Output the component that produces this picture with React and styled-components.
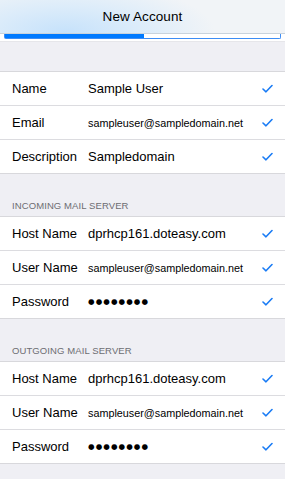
import React from 'react';
import styled, { createGlobalStyle } from 'styled-components';

const Global = createGlobalStyle`
body {
  margin: 0;
  background: #efeff4;
  font-family: "Liberation Sans", Arial, sans-serif;
  color: #000;
}
`

const Page = styled.div`
width: 285px;
height: 479px;
overflow: hidden;
background: #efeff4;
`

const Header = styled.div`
height: 33px;
display: flex;
align-items: center;
justify-content: center;
background: radial-gradient(ellipse 150px 50px at 65px 32px, #c6e2fb 0%, #dcecfa 50%, #f1f4f7 100%);
border-bottom: 1px solid #c9d3dc;
font-size: 13.5px;
font-weight: 500;
letter-spacing: 0.1px;
`

const ProgressWrap = styled.div`
background: #ffffff;
padding: 0 4px 2px 4px;
border-bottom: 1px solid #e6e6ea;
`

const Track = styled.div`
height: 4px;
border: 1px solid #3d8df5;
border-top: none;
border-radius: 0 0 2px 2px;
background: #fff;
`

const Fill = styled.div`
height: 100%;
background: #007aff;
`

const Spacer = styled.div`
height: ${p => p.h}px;
`

const SectionTitle = styled.div`
height: 42px;
box-sizing: border-box;
display: flex;
align-items: flex-end;
padding: 0 12px 5px;
font-size: 9.5px;
color: #6d6d72;
letter-spacing: 0.1px;
`

const Section = styled.div`
background: #fff;
border-top: 1px solid #d8d8dc;
border-bottom: 1px solid #d8d8dc;
`

const Row = styled.div`
height: 33px;
display: flex;
align-items: center;
padding-left: 12px;
& + & {
  border-top: 1px solid #dcdce0;
}
`

const Label = styled.div`
width: 76px;
font-size: 13px;
flex-shrink: 0;
`

const Value = styled.div`
flex: 1;
font-size: ${p => (p.small ? '10.8px' : '13px')};
white-space: nowrap;
`

const Dots = styled.div`
flex: 1;
font-family: "DejaVu Sans", sans-serif;
font-size: 7.5px;
letter-spacing: 1.1px;
`

const Check = styled.svg`
width: 11px;
height: 9px;
margin-right: 12px;
flex-shrink: 0;
`

function Tick() {
  return (
    <Check viewBox="0 0 11 9">
      <path d="M1 5 L4 7.8 L10 1.5" fill="none" stroke="#1a7cf5" strokeWidth="1.6" strokeLinecap="round" strokeLinejoin="round" />
    </Check>
  );
}

function Field({ label, value, small, password }) {
  return (
    <Row>
      <Label>{label}</Label>
      {password ? <Dots>{value}</Dots> : <Value small={small}>{value}</Value>}
      <Tick />
    </Row>
  );
}

function App() {
  return (
    <Page>
      <Global />
      <Header>New Account</Header>
      <ProgressWrap>
        <Track>
          <Fill style={{ width: '50.5%' }} />
        </Track>
      </ProgressWrap>
      <Spacer h={29} />
      <Section>
        <Field label="Name" value="Sample User" />
        <Field label="Email" value="sampleuser@sampledomain.net" small />
        <Field label="Description" value="Sampledomain" />
      </Section>
      <SectionTitle>INCOMING MAIL SERVER</SectionTitle>
      <Section>
        <Field label="Host Name" value="dprhcp161.doteasy.com" />
        <Field label="User Name" value="sampleuser@sampledomain.net" small />
        <Field label="Password" value="●●●●●●●●" password />
      </Section>
      <SectionTitle>OUTGOING MAIL SERVER</SectionTitle>
      <Section>
        <Field label="Host Name" value="dprhcp161.doteasy.com" />
        <Field label="User Name" value="sampleuser@sampledomain.net" small />
        <Field label="Password" value="●●●●●●●●" password />
      </Section>
    </Page>
  );
}

export default App
